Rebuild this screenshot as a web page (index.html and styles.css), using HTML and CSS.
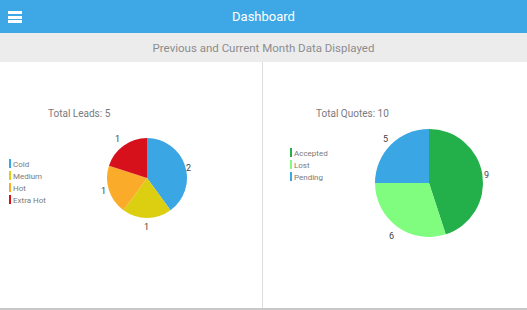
FILE: index.html
```html
<!DOCTYPE html>
<html lang="en">
<head>
  <meta charset="UTF-8">
  <title>Dashboard</title>
  <link rel="stylesheet" href="styles.css">
</head>
<body>
<div class="app">
  <header class="topbar">
    <div class="menu-btn">
      <span></span><span></span><span></span>
    </div>
    <h1>Dashboard</h1>
  </header>
  <div class="subbar">Previous and Current Month Data Displayed</div>
  <div class="panels">
    <div class="panel">
      <svg class="chart" width="262" height="246" viewBox="0 0 262 246">
        <text class="chart-title" x="48" y="55">Total Leads: 5</text>
        <g class="legend">
          <rect x="9" y="97" width="2" height="9" fill="#3ba6e4"/>
          <text x="13" y="105">Cold</text>
          <rect x="9" y="109" width="2" height="9" fill="#dccf12"/>
          <text x="13" y="117">Medium</text>
          <rect x="9" y="121" width="2" height="9" fill="#fbab2a"/>
          <text x="13" y="129">Hot</text>
          <rect x="9" y="133" width="2" height="9" fill="#d7111c"/>
          <text x="13" y="141">Extra Hot</text>
        </g>
        <path d="M147,116 L147,76 A40,40 0 0 1 170.51,148.36 Z" fill="#3ba6e4"/>
        <path d="M147,116 L170.51,148.36 A40,40 0 0 1 123.49,148.36 Z" fill="#dccf12"/>
        <path d="M147,116 L123.49,148.36 A40,40 0 0 1 108.96,103.64 Z" fill="#fbab2a"/>
        <path d="M147,116 L108.96,103.64 A40,40 0 0 1 147,76 Z" fill="#d7111c"/>
        <g class="slice-label">
          <text x="186" y="109">2</text>
          <text x="144" y="168">1</text>
          <text x="101" y="132">1</text>
          <text x="115" y="80">1</text>
        </g>
      </svg>
    </div>
    <div class="panel">
      <svg class="chart" width="264" height="246" viewBox="0 0 264 246">
        <text class="chart-title" x="53" y="55">Total Quotes: 10</text>
        <g class="legend">
          <rect x="27" y="86" width="2" height="9" fill="#23b04b"/>
          <text x="31" y="94">Accepted</text>
          <rect x="27" y="98" width="2" height="9" fill="#80fc7e"/>
          <text x="31" y="106">Lost</text>
          <rect x="27" y="110" width="2" height="9" fill="#3ba6e4"/>
          <text x="31" y="118">Pending</text>
        </g>
        <path d="M166,121 L166,67 A54,54 0 0 1 182.69,172.36 Z" fill="#23b04b"/>
        <path d="M166,121 L182.69,172.36 A54,54 0 0 1 112,121 Z" fill="#80fc7e"/>
        <path d="M166,121 L112,121 A54,54 0 0 1 166,67 Z" fill="#3ba6e4"/>
        <g class="slice-label">
          <text x="221" y="116">9</text>
          <text x="126" y="177">6</text>
          <text x="120" y="80">5</text>
        </g>
      </svg>
    </div>
  </div>
</div>
</body>
</html>
```

FILE: styles.css
```css
html,
body {
  margin: 0;
  padding: 0;
  background: #fff;
}
body {
  font-family: Roboto, "Liberation Sans", sans-serif;
  width: 527px;
  height: 310px;
  overflow: hidden;
}
.app {
  display: flex;
  flex-direction: column;
  height: 310px;
}
.topbar {
  position: relative;
  display: flex;
  align-items: center;
  justify-content: center;
  height: 33px;
  background: #3da8e5;
}
.topbar h1 {
  margin: 0;
  color: #fff;
  font-size: 13px;
  font-weight: 400;
}
.menu-btn {
  position: absolute;
  left: 8px;
  top: 11px;
  display: flex;
  flex-direction: column;
  gap: 1.5px;
  width: 14px;
}
.menu-btn span {
  display: block;
  height: 3px;
  background: #fff;
}
.subbar {
  height: 29px;
  line-height: 30px;
  background: #ececec;
  color: #8c8c8c;
  font-size: 11.5px;
  text-align: center;
}
.panels {
  flex: 1;
  display: grid;
  grid-template-columns: 262px 1fr;
  border-bottom: 2px solid #c8c8c8;
}
.panel + .panel {
  border-left: 1px solid #dcdcdc;
}
.chart {
  display: block;
}
.chart-title {
  font-size: 10px;
  fill: #7a7a7a;
}
.legend text {
  font-size: 8px;
  fill: #7a7a7a;
}
.slice-label text {
  font-size: 9px;
  fill: #444;
}
```
